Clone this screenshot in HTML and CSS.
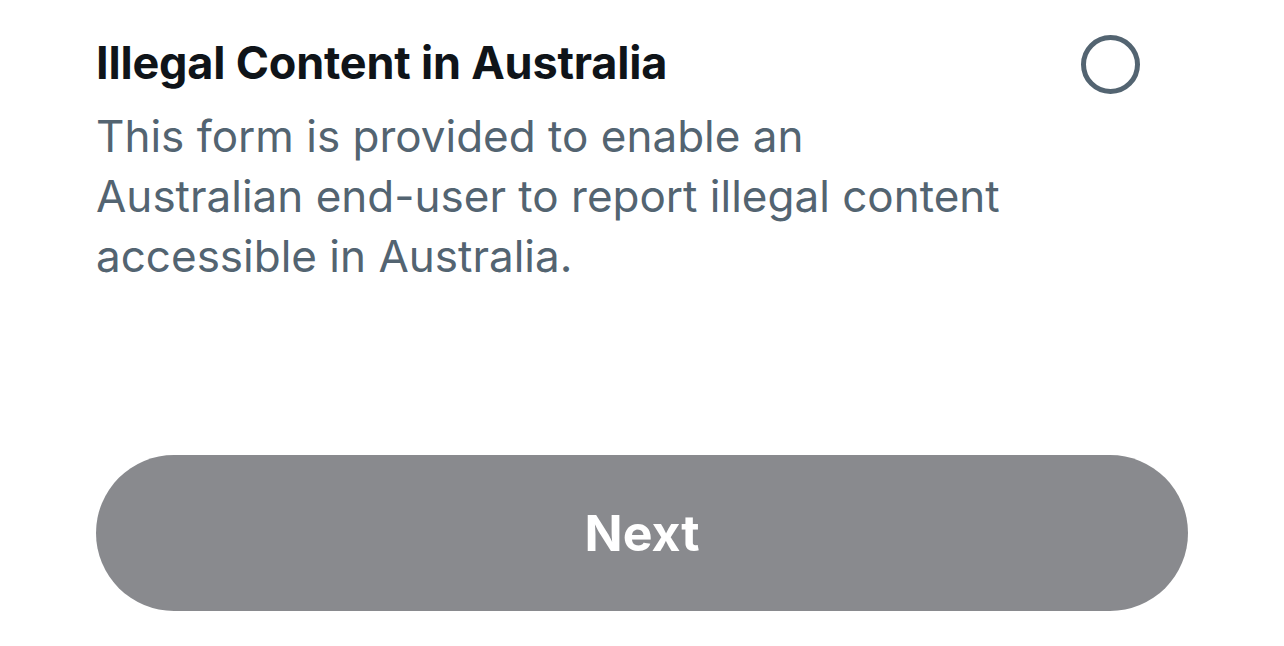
FILE: index.html
```html
<!doctype html>
<html lang="en">
<head>
    <meta charset="UTF-8">
    <meta name="viewport" content="width=device-width, initial-scale=1.0">
    <title>Report</title>
    <link rel="stylesheet" href="styles.css">
</head>
<body>
    <div class="container">
        <label class="option">
            <div class="option-text">
                <h2>Illegal Content in Australia</h2>
                <p>This form is provided to enable an<br>Australian end-user to report illegal content<br>accessible in Australia.</p>
            </div>
            <span class="radio"></span>
        </label>
        <button class="next-button">Next</button>
    </div>
</body>
</html>
```

FILE: styles.css
```css
:root {
    --text-color: #0f1419;
    --muted-color: #536471;
    --button-color: #898a8e;
}

body {
    font-family: 'Inter', 'Liberation Sans', sans-serif;
    color: var(--text-color);
    background-color: #fff;
    margin: 0;
    padding: 0;
}

.container {
    padding: 33px 96px 0 96px;
}

.option {
    display: flex;
    justify-content: space-between;
    align-items: flex-start;
    padding-right: 48px;
}

.option-text h2 {
    margin: 0 0 13px 0;
    font-size: 45px;
    font-weight: 700;
    line-height: 60px;
    letter-spacing: -0.2px;
}

.option-text p {
    margin: 0;
    font-size: 44px;
    font-weight: 400;
    line-height: 60px;
    color: var(--muted-color);
}

.radio {
    box-sizing: border-box;
    width: 59px;
    height: 59px;
    border: 5.5px solid var(--muted-color);
    border-radius: 50%;
    margin-top: 2px;
}

.next-button {
    display: block;
    width: 100%;
    height: 156px;
    margin-top: 169px;
    background-color: var(--button-color);
    color: #fff;
    border: none;
    border-radius: 78px;
    font-family: inherit;
    font-size: 50px;
    font-weight: 700;
    cursor: pointer;
}
```
